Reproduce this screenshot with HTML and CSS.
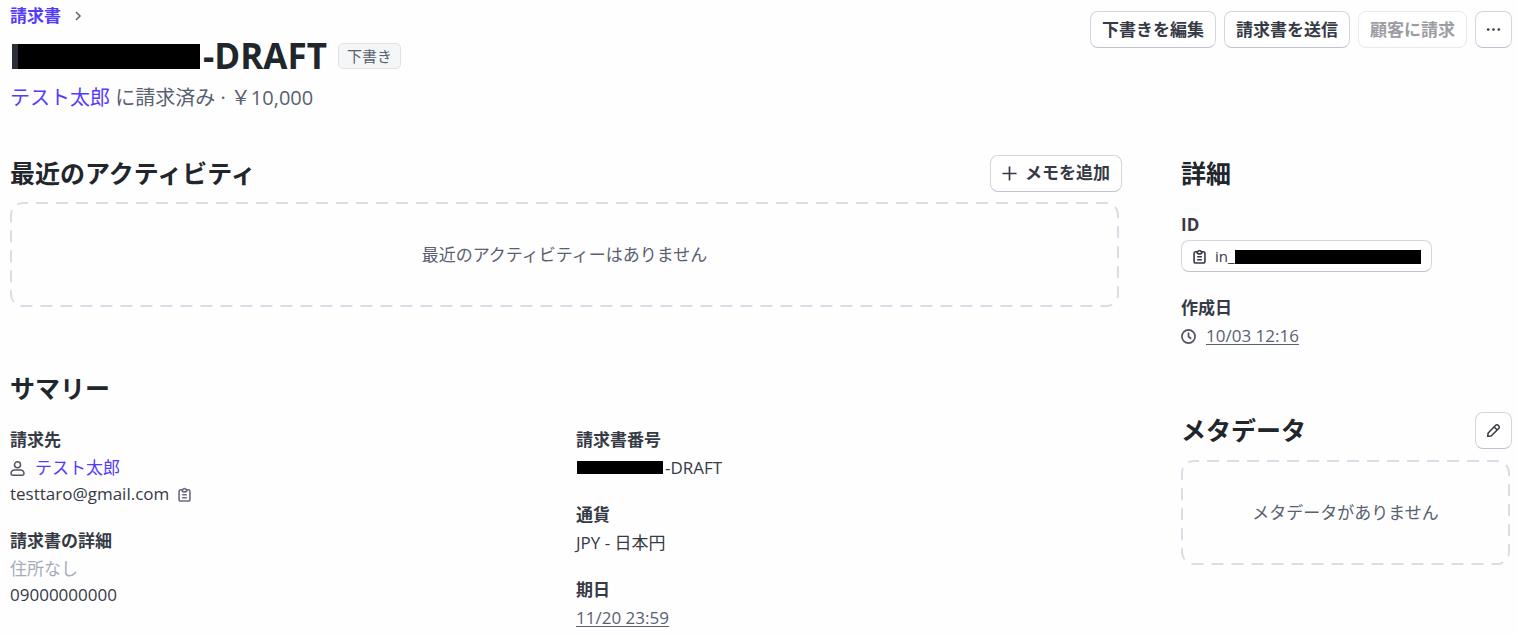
FILE: index.html
```html
<!DOCTYPE html>
<html lang="ja">
<head>
<meta charset="utf-8">
<meta name="viewport" content="width=device-width, initial-scale=1">
<title>請求書</title>
<link rel="stylesheet" href="styles.css">
</head>
<body>
<svg class="sprite" aria-hidden="true">
  <symbol id="clipboard" viewBox="0 0 16 16">
    <path d="M5 3H3.700a1.500 1.500 0 0 0-1.500 1.500v9a1.500 1.500 0 0 0 1.500 1.500h8.600a1.500 1.500 0 0 0 1.500-1.500v-9A1.500 1.500 0 0 0 12.300 3H11M5.500 2.800h.9a1.650 1.650 0 0 1 3.200 0h.9v1.500L9.300 5.200H6.700L5.500 4.300zM5.500 8.300h5M5.500 11.500h5" fill="none" stroke="currentColor" stroke-width="1.700" stroke-linejoin="round"/>
  </symbol>
</svg>
<div class="page">
  <header class="header">
    <div class="heading">
      <nav class="breadcrumb" aria-label="パンくずリスト">
        <a href="#invoices">請求書</a>
        <svg class="chevron" viewBox="0 0 8 10" aria-hidden="true"><path d="M2 1l4 4-4 4" fill="none" stroke="currentColor" stroke-width="1.500"/></svg>
      </nav>
      <div class="title-row">
        <h1><span class="mask mask-title"></span>-DRAFT</h1>
        <span class="badge">下書き</span>
      </div>
      <p class="subtitle"><a href="#customer">テスト太郎</a> に請求済み · ￥10,000</p>
    </div>
    <div class="actions">
      <button type="button" class="button">下書きを編集</button>
      <button type="button" class="button">請求書を送信</button>
      <button type="button" class="button" disabled>顧客に請求</button>
      <button type="button" class="button icon-button" aria-label="その他">
        <svg class="icon" viewBox="0 0 16 16" aria-hidden="true"><g fill="currentColor"><circle cx="2.300" cy="8" r="1.400"/><circle cx="8" cy="8" r="1.400"/><circle cx="13.700" cy="8" r="1.400"/></g></svg>
      </button>
    </div>
  </header>

  <div class="columns">
    <main class="main">
      <section>
        <div class="section-head">
          <h2>最近のアクティビティ</h2>
          <button type="button" class="button">
            <svg class="icon" viewBox="0 0 16 16" aria-hidden="true"><path d="M8 .5v15M.5 8h15" stroke="currentColor" stroke-width="1.800"/></svg>
            メモを追加
          </button>
        </div>
        <div class="empty">
          <svg class="dashes" aria-hidden="true"><rect x="1" y="1" rx="12"/></svg>
          最近のアクティビティーはありません
        </div>
      </section>

      <section>
        <div class="section-head"><h2>サマリー</h2></div>
        <div class="summary">
          <dl class="fields">
            <div>
              <dt>請求先</dt>
              <dd class="with-icon">
                <svg class="icon muted" viewBox="0 0 16 16" aria-hidden="true"><g fill="none" stroke="currentColor" stroke-width="1.600"><circle cx="8" cy="4.100" r="3.200"/><path d="M4.600 9.700h6.800a3.500 3.500 0 0 1 3.500 3.500v.5a1.500 1.500 0 0 1-1.500 1.500H2.600a1.500 1.500 0 0 1-1.500-1.500v-.5a3.500 3.500 0 0 1 3.500-3.500z"/></g></svg>
                <a href="#customer">テスト太郎</a>
              </dd>
              <dd class="with-icon email">testtaro@gmail.com
                <button type="button" class="copy" aria-label="コピー"><svg class="icon" aria-hidden="true"><use href="#clipboard"/></svg></button>
              </dd>
            </div>
            <div>
              <dt>請求書の詳細</dt>
              <dd class="none">住所なし</dd>
              <dd>09000000000</dd>
            </div>
          </dl>
          <dl class="fields">
            <div>
              <dt>請求書番号</dt>
              <dd><span class="mask mask-number"></span>-DRAFT</dd>
            </div>
            <div>
              <dt>通貨</dt>
              <dd>JPY - 日本円</dd>
            </div>
            <div>
              <dt>期日</dt>
              <dd><time class="date">11/20 23:59</time></dd>
            </div>
          </dl>
        </div>
      </section>
    </main>

    <aside class="side">
      <section>
        <div class="section-head"><h2>詳細</h2></div>
        <dl class="fields">
          <div>
            <dt>ID</dt>
            <dd><button type="button" class="button id-button"><svg class="icon" aria-hidden="true"><use href="#clipboard"/></svg><span>in_<span class="mask mask-id"></span></span></button></dd>
          </div>
          <div>
            <dt>作成日</dt>
            <dd class="with-icon">
              <svg class="icon muted" viewBox="0 0 16 16" aria-hidden="true"><g fill="none" stroke="currentColor" stroke-width="1.800"><circle cx="8" cy="8" r="7"/><path d="M8 3.800V8l2.800 2.400"/></g></svg>
              <time class="date">10/03 12:16</time>
            </dd>
          </div>
        </dl>
      </section>

      <section>
        <div class="section-head">
          <h2>メタデータ</h2>
          <button type="button" class="button icon-button" aria-label="メタデータを編集">
            <svg class="icon" viewBox="0 0 16 16" aria-hidden="true"><path d="M1.800 14.200l.5-3.500 8-8.200a1.900 1.900 0 0 1 2.700 0l.6.6a1.900 1.900 0 0 1 0 2.700l-8.200 8zM8.700 4.200l3.100 3.100" fill="none" stroke="currentColor" stroke-width="1.600" stroke-linejoin="round"/></svg>
          </button>
        </div>
        <div class="empty">
          <svg class="dashes" aria-hidden="true"><rect x="1" y="1" rx="12"/></svg>
          メタデータがありません
        </div>
      </section>
    </aside>
  </div>
</div>
</body>
</html>
```

FILE: styles.css
```css
* { box-sizing: border-box; }

body {
  margin: 0;
  background: #fefefe;
  color: #353a44;
  font: 17px/26px "Open Sans", "Noto Sans CJK JP", sans-serif;
}

h1, h2, p, dl, dd { margin: 0; }
a { color: #533afd; text-decoration: none; }
.sprite { position: absolute; width: 0; height: 0; }

.page { padding: 0 5px 0 10px; }

.header {
  display: flex;
  justify-content: space-between;
  align-items: flex-start;
  margin-bottom: 39px;
}

.breadcrumb {
  display: flex;
  align-items: center;
  gap: 13px;
  height: 31px;
  font-weight: 700;
}
.chevron { width: 8px; height: 10px; color: #596171; }

.title-row { display: flex; align-items: center; gap: 11px; }
h1 { color: #21252c; font-size: 35px; line-height: 50px; font-weight: 700; }

.badge {
  padding: 0 8px;
  border: 1px solid #dfe1e8;
  border-radius: 5px;
  background: #f5f6f8;
  color: #596171;
  font-size: 15px;
  line-height: 24px;
}

.subtitle { color: #596171; font-size: 20px; line-height: 34px; }

.mask { display: inline-block; background: #000; }
.mask-title { width: 188px; height: 25px; margin: 0 3px 0 2px; border-left: 6px solid #2a2e38; }
.mask-number { width: 86px; height: 13px; margin: 0 2px 0 1px; }
.mask-id { width: 186px; height: 14px; vertical-align: -2px; }

.actions { display: flex; gap: 8px; padding-top: 11px; }

.button {
  display: flex;
  align-items: center;
  justify-content: center;
  gap: 8px;
  height: 37px;
  padding: 0 11px;
  border: 1px solid #d5d5e0;
  border-bottom-color: #c0c2d0;
  border-radius: 8px;
  background: #fff;
  color: #353a44;
  font: inherit;
  font-weight: 700;
  white-space: nowrap;
}
.button:disabled { color: #9b9da3; border-color: #e9e9ef; }
.icon-button { width: 37px; padding: 0; }
.icon { flex: none; width: 15px; height: 15px; }
.muted { color: #50545e; }

.columns {
  display: grid;
  grid-template-columns: minmax(0, 1112fr) minmax(0, 331fr);
  gap: 59px;
}
.main, .side { display: flex; flex-direction: column; gap: 62px; }

.section-head {
  display: flex;
  align-items: center;
  justify-content: space-between;
  min-height: 38px;
}
h2 { color: #21252c; font-size: 25px; line-height: 38px; font-weight: 700; }

.empty {
  position: relative;
  display: flex;
  align-items: center;
  justify-content: center;
  height: 105px;
  margin: 10px 3px 0 0;
  color: #596171;
}
.side .empty { margin-top: 11px; margin-right: 2px; }
.dashes { position: absolute; inset: 0; width: 100%; height: 100%; }
.dashes rect {
  width: calc(100% - 2px);
  height: calc(100% - 2px);
  fill: none;
  stroke: #dadde6;
  stroke-width: 2px;
  stroke-dasharray: 12 8;
  stroke-dashoffset: 7px;
}

.summary { display: grid; grid-template-columns: 1fr 1fr; gap: 20px; }
.fields { display: flex; flex-direction: column; gap: 19px; padding-top: 18px; }
.side .fields { gap: 21px; }
dt { font-weight: 700; line-height: 30px; }
.with-icon { display: flex; align-items: center; gap: 10px; }
.email { gap: 8px; }
.none { color: #a3acba; }
.date { color: #596171; text-decoration: underline; text-underline-offset: 2px; text-decoration-thickness: 1px; }

.copy { display: flex; padding: 0; border: 0; background: none; color: #6c6a85; }

.id-button { height: 32px; padding: 0 10px; font-size: 15px; font-weight: 400; }
```
